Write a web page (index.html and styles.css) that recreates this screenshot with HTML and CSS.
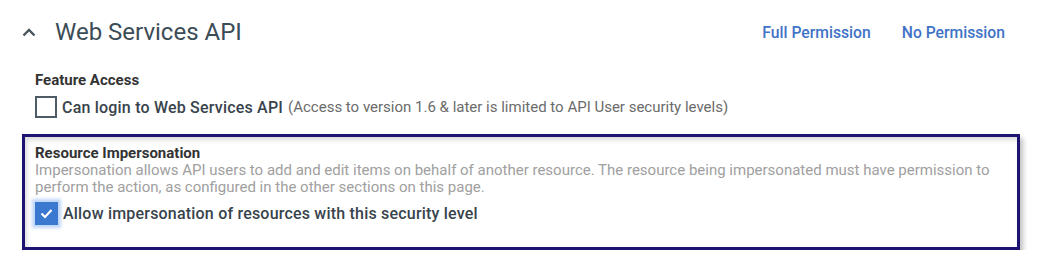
FILE: index.html
```html
<!DOCTYPE html>
<html lang="en">
<head>
  <meta charset="UTF-8">
  <title>Web Services API</title>
  <link rel="stylesheet" href="styles.css">
</head>
<body>
  <div class="section">
    <div class="section-hd">
      <h2 class="section-title">
        <svg class="chevron" width="14" height="10" viewBox="0 0 14 10"><path d="M1.5 8.5 L7 3 L12.5 8.5" fill="none" stroke="#48555e" stroke-width="2.4"/></svg>
        Web Services API
      </h2>
      <div class="perm-links">
        <a href="#">Full Permission</a>
        <a href="#">No Permission</a>
      </div>
    </div>

    <div class="group">
      <div class="group-title">Feature Access</div>
      <label class="check-row">
        <span class="checkbox"></span>
        <span class="check-label">Can login to Web Services API</span>
        <span class="check-note">(Access to version 1.6 &amp; later is limited to API User security levels)</span>
      </label>
    </div>

    <div class="group highlight">
      <div class="group-title">Resource Impersonation</div>
      <p class="group-desc">Impersonation allows API users to add and edit items on behalf of another resource. The resource being impersonated must have permission to perform the action, as configured in the other sections on this page.</p>
      <label class="check-row">
        <span class="checkbox checked">
          <svg width="13" height="11" viewBox="0 0 13 11"><path d="M1.5 5.5 L5 9 L11.5 2" fill="none" stroke="#fff" stroke-width="2.2"/></svg>
        </span>
        <span class="check-label">Allow impersonation of resources with this security level</span>
      </label>
    </div>
  </div>
</body>
</html>
```

FILE: styles.css
```css
*{
  margin: 0;
  padding: 0;
  box-sizing: border-box;
  font-family: Roboto, "Noto Sans", sans-serif;
}

body{
  background: #fff;
}

.section{
  width: 1045px;
  padding-top: 18px;
}

.section-hd{
  display: flex;
  align-items: center;
  justify-content: space-between;
  padding: 0 40px 0 22px;
  height: 28px;
}

.section-title{
  display: flex;
  align-items: center;
  gap: 19px;
  font-size: 24px;
  font-weight: 400;
  color: #3c4c57;
}

.chevron{
  display: block;
}

.perm-links{
  display: flex;
  gap: 31px;
}

.perm-links a{
  font-size: 15.7px;
  font-weight: 500;
  color: #3f73c6;
  text-decoration: none;
}

.group{
  padding: 0 0 0 35px;
  margin-top: 25px;
}

.group-title{
  font-size: 15px;
  font-weight: 700;
  color: #333;
  line-height: 18px;
}

.check-row{
  display: flex;
  align-items: center;
  margin-top: 7px;
}

.checkbox{
  width: 22px;
  height: 22px;
  border: 2px solid #4c5b64;
  margin-right: 5px;
  display: flex;
  align-items: center;
  justify-content: center;
  flex-shrink: 0;
}

.checkbox.checked{
  width: 23px;
  height: 23px;
  background: #3b78d0;
  border-color: #3b78d0;
  box-shadow: 0 0 3px 3px rgba(110,165,245,0.45);
}

.check-label{
  font-size: 16px;
  font-weight: 500;
  color: #38434c;
  letter-spacing: 0.2px;
}

.check-note{
  font-size: 15px;
  color: #6b6b6b;
  margin-left: 5px;
}

.highlight{
  margin: 16px 25px 0 22px;
  padding: 7px 10px 22px 10px;
  border: 3px solid #1c1470;
  box-shadow: 3px 4px 5px rgba(0,0,0,0.25), inset 2px 3px 4px rgba(0,0,0,0.15);
}

.group-desc{
  font-size: 15px;
  line-height: 17px;
  color: #a0a0a0;
}

.highlight .check-row{
  margin-top: 6px;
}
```
